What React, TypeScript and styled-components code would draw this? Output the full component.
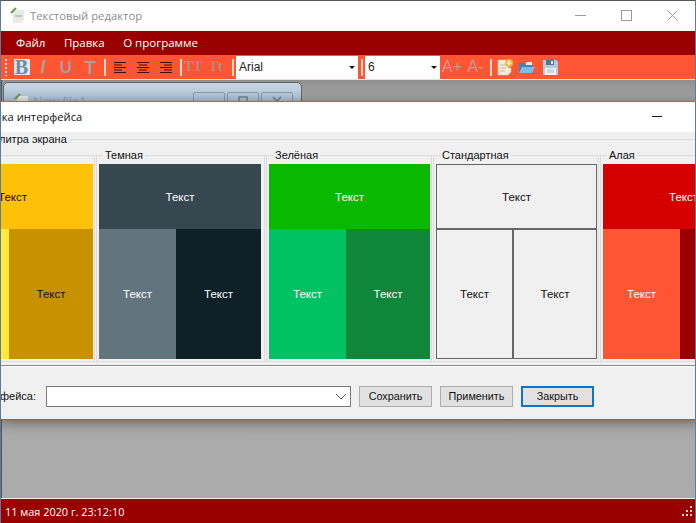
import React from 'react';
import styled, { createGlobalStyle } from 'styled-components';

const GlobalStyle = createGlobalStyle`
    html, body {
        margin: 0;
        padding: 0;
        width: 696px;
        height: 523px;
        overflow: hidden;
        background: #ababab;
    }
    * {
        box-sizing: border-box;
    }
`;

const Window = styled.div`
    width: 696px;
    height: 523px;
    display: flex;
    flex-direction: column;
    font-family: "Liberation Sans", Arial, sans-serif;
    font-size: 11px;
    color: #111;
    overflow: hidden;
    border-top: 1px solid #555;
    border-left: 1px solid #5b7c9c;
    border-right: 1px solid #5b7c9c;
`;

const TitleBar = styled.div`
    height: 30px;
    flex: none;
    background: #fff;
    display: flex;
    align-items: center;
    padding: 0 0 2px 9px;
`;

const TitleText = styled.span`
    margin-left: 4px;
    font-family: "Open Sans", sans-serif;
    font-size: 11.3px;
    color: #8c8c8c;
`;

const WindowButtons = styled.div`
    margin-left: auto;
    display: flex;
    align-items: center;
    height: 100%;
`;

const WindowButton = styled.div`
    width: 46px;
    height: 100%;
    display: flex;
    align-items: center;
    justify-content: center;
`;

const MenuBar = styled.div`
    height: 24px;
    flex: none;
    background: #9b0000;
    display: flex;
    align-items: center;
    gap: 18.5px;
    padding: 0 0 2px 15px;
`;

const MenuItem = styled.span`
    color: #fff;
    font-family: "Open Sans", sans-serif;
    font-size: 11.5px;
`;

const ToolBar = styled.div`
    height: 25px;
    flex: none;
    background: #ff5533;
    display: flex;
    align-items: center;
    border-bottom: 1px solid #f0e0d8;
`;

const Grip = styled.div`
    width: 2px;
    height: 17px;
    margin: 0 3px 0 4px;
    background: repeating-linear-gradient(to bottom, #ffe3da 0 2px, transparent 2px 4px);
`;

const ToolSep = styled.div`
    width: 2px;
    height: 17px;
    flex: none;
    margin: 0 2px 0 3px;
    background: #f7d8cc;
`;

const ToolIcon = styled.div<{ $w?: number }>`
    width: ${(p) => p.$w ?? 23}px;
    height: 22px;
    display: flex;
    align-items: center;
    justify-content: center;
    flex: none;
`;

const BoldBox = styled.span`
    width: 16px;
    height: 16px;
    background: #dfe8f0;
    color: #6d8ca3;
    font-family: "Liberation Serif", serif;
    font-weight: 700;
    font-size: 20px;
    line-height: 16px;
    text-align: center;
`;

const Glyph = styled.span<{ $italic?: boolean; $size?: number; $serif?: boolean; $color?: string; $weight?: number }>`
    color: ${(p) => p.$color ?? '#ad9e9c'};
    font-family: ${(p) => (p.$serif ? '"Liberation Serif", serif' : '"Liberation Sans", sans-serif')};
    font-style: ${(p) => (p.$italic ? 'italic' : 'normal')};
    font-weight: ${(p) => p.$weight ?? 700};
    font-size: ${(p) => p.$size ?? 18}px;
    line-height: 1;
`;

const Combo = styled.div<{ $w: number }>`
    width: ${(p) => p.$w}px;
    height: 23px;
    flex: none;
    background: #fff;
    display: flex;
    align-items: center;
    justify-content: space-between;
    padding: 0 3px;
    font-size: 12px;
    color: #222;
`;

const ComboArrow = styled.span`
    width: 0;
    height: 0;
    border-left: 3px solid transparent;
    border-right: 3px solid transparent;
    border-top: 3px solid #111;
`;

const Workspace = styled.div`
    position: relative;
    flex: 1;
    background: linear-gradient(to bottom, #8f8f8f 0, #a8a8a8 20px, #ababab 100%);
    border-left: 1px solid #555;
    padding: 2px 0 0 1px;
`;

const ChildWindow = styled.div`
    width: 299px;
    height: 40px;
    background: linear-gradient(to bottom, #c6d5e3 0, #aec2d6 20px);
    border: 1px solid #666;
    border-radius: 5px 5px 0 0;
    display: flex;
    align-items: flex-start;
    padding: 9px 8px 0 10px;
    color: #94a8ba;
    font-size: 13px;
`;

const ChildTitle = styled.span`
    margin-left: 3px;
    margin-top: 2px;
    margin-right: auto;
`;

const ChildButton = styled.div`
    width: 32px;
    height: 20px;
    margin-left: 2px;
    padding-top: 3px;
    border: 1px solid #8a9cad;
    border-radius: 2px;
    display: flex;
    justify-content: center;
    align-items: flex-start;
`;

const Dialog = styled.div`
    position: absolute;
    top: 21px;
    left: -2px;
    width: 700px;
    height: 319px;
    background: #f0f0f0;
    border-top: 1px solid #3f8ac8;
    border-bottom: 1px solid #4a7699;
    box-shadow: 0 2px 12px rgba(0, 0, 0, 0.45);
    overflow: hidden;
`;

const DialogHeader = styled.div`
    height: 30px;
    background: #fff;
    display: flex;
    align-items: center;
    justify-content: space-between;
    padding: 0 38px 2px 0;
    font-family: "Open Sans", sans-serif;
    font-size: 11.2px;
    color: #111;
`;

const DialogTitle = styled.span`
    margin-left: -44px;
`;

const MinLine = styled.span`
    width: 10px;
    height: 1px;
    background: #111;
`;

const PaletteFrame = styled.fieldset`
    margin: 1px 0 0 -90px;
    padding: 0;
    width: 900px;
    height: 233px;
    border: none;
    border-top: 1px solid #dcdcdc;
    border-bottom: 1px solid #8a8a8a;
    box-shadow: 0 1px 0 #fff;
    display: block;
`;

const FrameLegend = styled.legend`
    margin-left: 73px;
    padding: 0 2px;
    font-size: 11px;
    line-height: 13px;
`;

const Groups = styled.div`
    display: flex;
    gap: 1px;
    margin-top: 3px;
    margin-left: 19px;
`;

const Group = styled.fieldset<{ $w: number }>`
    margin: 0;
    padding: 2px 0 2px 2px;
    width: ${(p) => p.$w}px;
    height: 213px;
    flex: none;
    border: 1px solid #dcdcdc;
`;

const GroupLegend = styled.legend`
    margin-left: 4px;
    padding: 0 2px;
    font-size: 11px;
    line-height: 13px;
`;

const Tile = styled.div<{ $w: number }>`
    width: ${(p) => p.$w}px;
    height: 195px;
    display: grid;
    grid-template-columns: 77px 1fr;
    grid-template-rows: 65px 130px;
`;

const Cell = styled.div<{ $bg: string; $fg: string; $wide?: boolean; $line?: boolean }>`
    grid-column: ${(p) => (p.$wide ? '1 / 3' : 'auto')};
    background: ${(p) => p.$bg};
    color: ${(p) => p.$fg};
    border: ${(p) => (p.$line ? '1px solid #666' : 'none')};
    display: flex;
    align-items: center;
    justify-content: center;
    font-size: 11.5px;
`;

const Footer = styled.div`
    display: flex;
    align-items: center;
    height: 53px;
    padding-top: 7px;
`;

const FooterLabel = styled.span`
    width: 48px;
    font-size: 11px;
`;

const FooterCombo = styled.div`
    width: 305px;
    height: 21px;
    margin-left: -2px;
    background: #fff;
    border: 1px solid #7a7a7a;
    display: flex;
    align-items: center;
    justify-content: flex-end;
    padding-right: 3px;
`;

const DialogButton = styled.div<{ $focused?: boolean }>`
    width: 73px;
    height: 21px;
    margin-left: 8px;
    background: #e1e1e1;
    border: ${(p) => (p.$focused ? '2px solid #0f74c8' : '1px solid #adadad')};
    display: flex;
    align-items: center;
    justify-content: center;
    font-size: 10.8px;
    color: #111;
`;

const StatusBar = styled.div`
    height: 25px;
    flex: none;
    background: #9b0000;
    border-top: 1px solid #f0f0f0;
    display: flex;
    align-items: center;
    justify-content: space-between;
    padding: 0 2px 0 4px;
    color: #fff;
    font-family: "Open Sans", sans-serif;
    font-size: 10.9px;
`;

const palettes = [
    { name: 'Янтарная', group: 166, tile: 161, top: '#ffc107', left: '#ffeb3b', right: '#c79100', fg: '#111' },
    { name: 'Темная', group: 169, tile: 162, top: '#37474f', left: '#62757f', right: '#102027', fg: '#fff' },
    { name: 'Зелёная', group: 166, tile: 161, top: '#09b800', left: '#00c264', right: '#0e873a', fg: '#fff' },
    { name: 'Стандартная', group: 166, tile: 161, top: '#f0f0f0', left: '#f0f0f0', right: '#f0f0f0', fg: '#111', line: true },
    { name: 'Алая', group: 166, tile: 161, top: '#d50000', left: '#ff5533', right: '#9b0000', fg: '#fff' },
];

const AppIcon = () => (
    <svg width="16" height="18" viewBox="0 0 16 18">
        <path d="M3 4h11v10l-3 3H3z" fill="#e6ebe6" />
        <path d="M5 10h7" stroke="#9aa09a" strokeWidth="1" />
        <path d="M1 7L6 2" stroke="#6f9a3c" strokeWidth="2" />
    </svg>
);

const AlignIcon = ({ mode }: { mode: 'left' | 'center' | 'right' }) => {
    const lines = [12, 8, 12, 8, 12];
    return (
        <svg width="14" height="13" viewBox="0 0 14 13">
            {lines.map((w, i) => {
                const x = mode === 'left' ? 1 : mode === 'right' ? 13 - w : 7 - w / 2;
                return <rect key={i} x={x} y={i * 2.5 + 1} width={w} height="1" fill="#3a1010" />;
            })}
        </svg>
    );
};

const NewFileIcon = () => (
    <svg width="17" height="18" viewBox="0 0 17 18">
        <path d="M1 2h10v8l3 0v4l-3 3H1z" fill="#f3eed8" stroke="#d8cfa8" strokeWidth="0.6" />
        <path d="M3 7h6M3 10h6M3 13h5" stroke="#bdb8a0" strokeWidth="1" />
        <circle cx="12" cy="5" r="4" fill="#f2b544" />
        <path d="M12 2.5v5M9.5 5h5" stroke="#fff" strokeWidth="1.2" />
    </svg>
);

const FolderIcon = () => (
    <svg width="18" height="15" viewBox="0 0 18 15">
        <path d="M1 13V3h5l1 2h7v3z" fill="#3f86b8" />
        <path d="M1 13l3-6h13l-3 6z" fill="#7dbbe8" />
        <path d="M8 2h6v3H8z" fill="#e8eef2" />
    </svg>
);

const SaveIcon = () => (
    <svg width="17" height="17" viewBox="0 0 17 17">
        <path d="M1 1h13l2 2v13H1z" fill="#b8cbdc" />
        <path d="M4 1h8v5H4z" fill="#5c7488" />
        <path d="M9 2h2v3H9z" fill="#dfe8ef" />
        <path d="M3 9h11v7H3z" fill="#f0f3f6" />
        <path d="M5 11h7M5 13h7" stroke="#aab8c4" strokeWidth="1" />
    </svg>
);

const SizeGrip = () => (
    <svg width="12" height="12" viewBox="0 0 12 12" fill="#e8d8d8">
        <rect x="9" y="1" width="2" height="2" />
        <rect x="5" y="5" width="2" height="2" />
        <rect x="9" y="5" width="2" height="2" />
        <rect x="1" y="9" width="2" height="2" />
        <rect x="5" y="9" width="2" height="2" />
        <rect x="9" y="9" width="2" height="2" />
    </svg>
);

const App = () => (
    <Window>
        <GlobalStyle />
        <TitleBar>
            <AppIcon />
            <TitleText>Текстовый редактор</TitleText>
            <WindowButtons>
                <WindowButton>
                    <svg width="11" height="11" viewBox="0 0 11 11"><path d="M0 5.5h11" stroke="#9a9a9a" /></svg>
                </WindowButton>
                <WindowButton>
                    <svg width="11" height="11" viewBox="0 0 11 11"><rect x="0.5" y="0.5" width="10" height="10" fill="none" stroke="#9a9a9a" /></svg>
                </WindowButton>
                <WindowButton>
                    <svg width="11" height="11" viewBox="0 0 11 11"><path d="M0.5 0.5l10 10M10.5 0.5l-10 10" stroke="#9a9a9a" /></svg>
                </WindowButton>
            </WindowButtons>
        </TitleBar>
        <MenuBar>
            <MenuItem>Файл</MenuItem>
            <MenuItem>Правка</MenuItem>
            <MenuItem>О программе</MenuItem>
        </MenuBar>
        <ToolBar>
            <Grip />
            <ToolIcon><BoldBox>B</BoldBox></ToolIcon>
            <ToolIcon $w={20}><Glyph $italic $size={18}>I</Glyph></ToolIcon>
            <ToolIcon $w={26}><Glyph $size={17} $color="#a89ca4">U</Glyph></ToolIcon>
            <ToolIcon $w={22}><Glyph $size={19} $color="#ad9e9c">T</Glyph></ToolIcon>
            <ToolSep />
            <ToolIcon><AlignIcon mode="left" /></ToolIcon>
            <ToolIcon><AlignIcon mode="center" /></ToolIcon>
            <ToolIcon><AlignIcon mode="right" /></ToolIcon>
            <ToolSep />
            <ToolIcon $w={19}><Glyph $serif $size={14} $color="#b08a80">TT</Glyph></ToolIcon>
            <ToolIcon $w={26}><Glyph $serif $size={14} $color="#b08a80">Tt</Glyph></ToolIcon>
            <ToolSep />
            <Combo $w={122}>Arial<ComboArrow /></Combo>
            <ToolSep />
            <Combo $w={75}>6<ComboArrow /></Combo>
            <ToolIcon $w={24}><Glyph $size={16} $weight={400} $color="#c49a98">A+</Glyph></ToolIcon>
            <ToolIcon><Glyph $size={16} $weight={400} $color="#c49a98">A-</Glyph></ToolIcon>
            <ToolSep />
            <ToolIcon $w={22}><NewFileIcon /></ToolIcon>
            <ToolIcon $w={22}><FolderIcon /></ToolIcon>
            <ToolIcon $w={24}><SaveIcon /></ToolIcon>
        </ToolBar>
        <Workspace>
            <ChildWindow>
                <AppIcon />
                <ChildTitle>New file1</ChildTitle>
                <ChildButton>
                    <svg width="12" height="10" viewBox="0 0 12 10"><path d="M1 7.5h10" stroke="#6f8295" strokeWidth="2" /></svg>
                </ChildButton>
                <ChildButton>
                    <svg width="12" height="10" viewBox="0 0 12 10"><rect x="2" y="1" width="8" height="8" fill="none" stroke="#6f8295" strokeWidth="1.5" /></svg>
                </ChildButton>
                <ChildButton>
                    <svg width="12" height="10" viewBox="0 0 12 10"><path d="M2 1l8 8M10 1l-8 8" stroke="#6f8295" strokeWidth="1.5" /></svg>
                </ChildButton>
            </ChildWindow>
            <Dialog>
                <DialogHeader>
                    <DialogTitle>Настройка интерфейса</DialogTitle>
                    <MinLine />
                </DialogHeader>
                <PaletteFrame>
                    <FrameLegend>Палитра экрана</FrameLegend>
                    <Groups>
                        {palettes.map((p) => (
                            <Group key={p.name} $w={p.group}>
                                <GroupLegend>{p.name}</GroupLegend>
                                <Tile $w={p.tile}>
                                    <Cell $wide $bg={p.top} $fg={p.fg} $line={p.line}>Текст</Cell>
                                    <Cell $bg={p.left} $fg={p.fg} $line={p.line}>Текст</Cell>
                                    <Cell $bg={p.right} $fg={p.fg} $line={p.line}>Текст</Cell>
                                </Tile>
                            </Group>
                        ))}
                    </Groups>
                </PaletteFrame>
                <Footer>
                    <FooterLabel>фейса:</FooterLabel>
                    <FooterCombo>
                        <svg width="12" height="7" viewBox="0 0 12 7"><path d="M1 1l5 5 5-5" fill="none" stroke="#555" /></svg>
                    </FooterCombo>
                    <DialogButton>Сохранить</DialogButton>
                    <DialogButton>Применить</DialogButton>
                    <DialogButton $focused>Закрыть</DialogButton>
                </Footer>
            </Dialog>
        </Workspace>
        <StatusBar>
            11 мая 2020 г. 23:12:10
            <SizeGrip />
        </StatusBar>
    </Window>
);

export default App;
